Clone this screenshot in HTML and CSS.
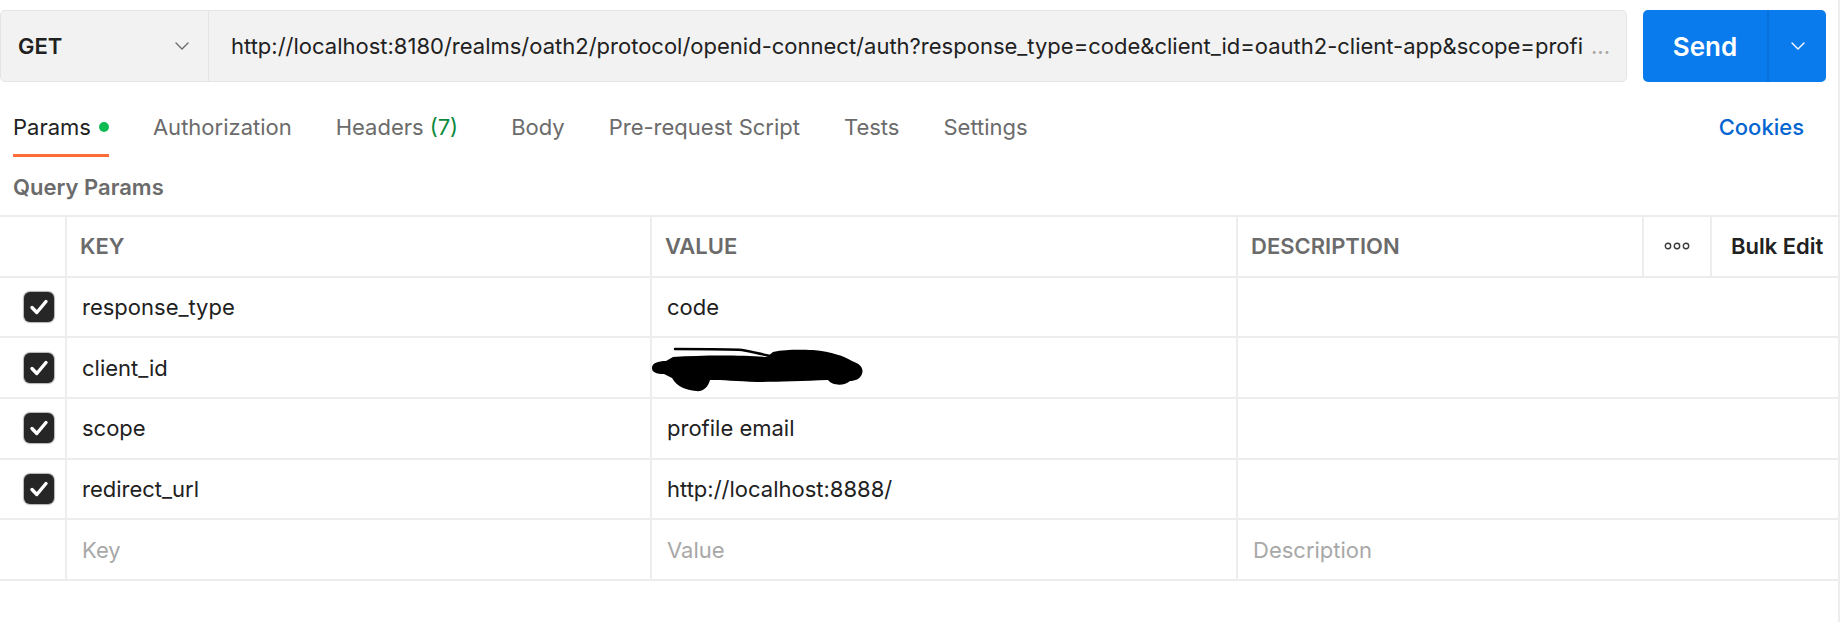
FILE: index.html
```html
<!DOCTYPE html>
<html lang="en">
<head>
<meta charset="utf-8">
<title>Request</title>
<link rel="stylesheet" href="styles.css">
</head>
<body>
<div class="page">
  <div class="request-bar">
    <div class="request-box">
      <div class="method">
        <span class="method-name">GET</span>
        <svg class="chev" width="14" height="8" viewBox="0 0 14 8"><polyline points="1,1 7,7 13,1" fill="none" stroke="#6b6b6b" stroke-width="1.4" stroke-linecap="round" stroke-linejoin="round"/></svg>
      </div>
      <div class="url"><span class="url-text">http://localhost:8180/realms/oath2/protocol/openid-connect/auth?response_type=code&amp;client_id=oauth2-client-app&amp;scope=profi</span><span class="url-more">...</span></div>
    </div>
    <div class="send">
      <span class="send-label">Send</span>
      <span class="send-drop"><svg width="14" height="8" viewBox="0 0 14 8"><polyline points="1,1 7,7 13,1" fill="none" stroke="#ffffff" stroke-width="1.4" stroke-linecap="round" stroke-linejoin="round"/></svg></span>
    </div>
  </div>

  <div class="tabs">
    <div class="tab active">Params<span class="dot"></span></div>
    <div class="tab">Authorization</div>
    <div class="tab tab-headers">Headers <span class="count">(7)</span></div>
    <div class="tab">Body</div>
    <div class="tab">Pre-request Script</div>
    <div class="tab">Tests</div>
    <div class="tab">Settings</div>
    <div class="tab cookies">Cookies</div>
  </div>

  <div class="section-title">Query Params</div>

  <div class="table">
    <div class="row head">
      <div class="cell c-check"></div>
      <div class="cell">KEY</div>
      <div class="cell">VALUE</div>
      <div class="cell">DESCRIPTION</div>
      <div class="cell c-more"><svg width="26" height="8" viewBox="0 0 26 8"><circle cx="4" cy="4" r="2.7" fill="none" stroke="#3a3a3a" stroke-width="1.4"/><circle cx="13" cy="4" r="2.7" fill="none" stroke="#3a3a3a" stroke-width="1.4"/><circle cx="22" cy="4" r="2.7" fill="none" stroke="#3a3a3a" stroke-width="1.4"/></svg></div>
      <div class="cell c-bulk">Bulk Edit</div>
    </div>

    <div class="row">
      <div class="cell c-check"><span class="checkbox"><svg width="30" height="30" viewBox="0 0 30 30"><polyline points="8,15.5 12.8,20.5 22,9.5" fill="none" stroke="#fff" stroke-width="3.4" stroke-linecap="round" stroke-linejoin="round"/></svg></span></div>
      <div class="cell">response_type</div>
      <div class="cell">code</div>
      <div class="cell c-desc"></div>
    </div>

    <div class="row">
      <div class="cell c-check"><span class="checkbox"><svg width="30" height="30" viewBox="0 0 30 30"><polyline points="8,15.5 12.8,20.5 22,9.5" fill="none" stroke="#fff" stroke-width="3.4" stroke-linecap="round" stroke-linejoin="round"/></svg></span></div>
      <div class="cell">client_id</div>
      <div class="cell c-redacted"><svg class="scribble" width="214" height="48" viewBox="0 0 214 48"><path d="M0,22 C0,17 6,15 14,15 L21,11 C50,9 90,9 115,11 L121,6 C135,3 150,4 161,4 C180,6 192,10 200,15 C208,18 212,22 210,28 C208,33 203,35 198,35 C193,40 180,40 176,34 C150,35 120,36 105,36 C85,35 70,34 58,34 C56,42 50,46 44,45 C34,44 25,41 20,32 L12,28 C4,28 0,26 0,22 Z" fill="#000"/><path d="M23,3 C50,3 80,3 90,4 C100,6 110,8 118,10" fill="none" stroke="#000" stroke-width="2.4" stroke-linecap="round"/></svg></div>
      <div class="cell c-desc"></div>
    </div>

    <div class="row">
      <div class="cell c-check"><span class="checkbox"><svg width="30" height="30" viewBox="0 0 30 30"><polyline points="8,15.5 12.8,20.5 22,9.5" fill="none" stroke="#fff" stroke-width="3.4" stroke-linecap="round" stroke-linejoin="round"/></svg></span></div>
      <div class="cell">scope</div>
      <div class="cell">profile email</div>
      <div class="cell c-desc"></div>
    </div>

    <div class="row">
      <div class="cell c-check"><span class="checkbox"><svg width="30" height="30" viewBox="0 0 30 30"><polyline points="8,15.5 12.8,20.5 22,9.5" fill="none" stroke="#fff" stroke-width="3.4" stroke-linecap="round" stroke-linejoin="round"/></svg></span></div>
      <div class="cell">redirect_url</div>
      <div class="cell">http://localhost:8888/</div>
      <div class="cell c-desc"></div>
    </div>

    <div class="row">
      <div class="cell c-check"></div>
      <div class="cell placeholder">Key</div>
      <div class="cell placeholder">Value</div>
      <div class="cell c-desc placeholder">Description</div>
    </div>
  </div>
</div>
</body>
</html>
```

FILE: styles.css
```css
* {
  box-sizing: border-box;
}

html,
body {
  margin: 0;
  background: #ffffff;
}

body {
  font-family: Inter, "Noto Sans", "Liberation Sans", sans-serif;
  color: #212121;
}

.page {
  width: 1840px;
  height: 622px;
  border-right: 2px solid #ededed;
  overflow: hidden;
}

/* Request bar */
.request-bar {
  display: flex;
  gap: 16px;
  padding: 10px 12px 0 0;
}

.request-box {
  flex: 1;
  display: flex;
  height: 72px;
  background: #f2f2f2;
  border: 1px solid #e4e4e4;
  border-radius: 5px;
  overflow: hidden;
}

.method {
  width: 208px;
  flex: none;
  display: flex;
  align-items: center;
  padding: 0 19px 0 17px;
  border-right: 1px solid #e4e4e4;
}

.method-name {
  font-size: 22px;
  font-weight: 600;
  color: #212121;
}

.chev {
  margin-left: auto;
}

.url {
  flex: 1;
  display: flex;
  align-items: center;
  padding-left: 22px;
  font-size: 22px;
  color: #212121;
  white-space: nowrap;
  overflow: hidden;
}

.url-more {
  margin-left: 8px;
  color: #a6a6a6;
}

.send {
  width: 183px;
  height: 72px;
  flex: none;
  display: flex;
  background: #097bed;
  border-radius: 5px;
  color: #ffffff;
}

.send-label {
  width: 124px;
  display: flex;
  align-items: center;
  justify-content: center;
  font-size: 26px;
  font-weight: 600;
}

.send-drop {
  flex: 1;
  display: flex;
  align-items: center;
  justify-content: center;
  border-left: 2px solid rgba(0, 0, 0, 0.08);
}

/* Tabs */
.tabs {
  display: flex;
  align-items: flex-end;
  gap: 44px;
  margin-top: 31px;
  padding: 0 34px 0 13px;
}

.tab {
  display: flex;
  align-items: center;
  font-size: 22px;
  line-height: 28px;
  padding-bottom: 13px;
  border-bottom: 3px solid transparent;
  color: #6b6b6b;
  white-space: nowrap;
}

.tab.active {
  color: #212121;
  border-bottom-color: #ff6c37;
}

.dot {
  width: 10px;
  height: 10px;
  border-radius: 50%;
  background: #0cbb52;
  margin-left: 8px;
}

.count {
  color: #0b8a3e;
  margin-left: 6px;
}

.tab-headers {
  margin-right: 9px;
}

.cookies {
  margin-left: auto;
  color: #0265d2;
  font-weight: 500;
}

/* Section */
.section-title {
  padding: 16px 13px 14px;
  font-size: 22px;
  line-height: 28px;
  font-weight: 600;
  color: #6b6b6b;
}

/* Table */
.table {
  border-bottom: 2px solid #ededed;
}

.row {
  display: grid;
  grid-template-columns: 65px 585px 586px 406px 68px 1fr;
  height: 60.7px;
  border-top: 2px solid #ededed;
}

.cell {
  display: flex;
  align-items: center;
  padding-left: 15px;
  border-left: 2px solid #ededed;
  font-size: 22px;
  color: #212121;
  white-space: nowrap;
  overflow: hidden;
}

.cell.c-check {
  border-left: none;
  padding-left: 24px;
}

.head .cell {
  color: #6b6b6b;
  font-weight: 600;
  padding-left: 13px;
}

.head .cell.c-more {
  padding-left: 0;
  justify-content: center;
}

.head .cell.c-bulk {
  padding-left: 19px;
  color: #212121;
}

.cell.c-desc {
  grid-column: span 3;
}

.cell.c-redacted {
  padding-left: 0;
  overflow: visible;
}

.scribble {
  margin-top: 4px;
}

.placeholder {
  color: #a8a8a8;
}

.checkbox {
  width: 30px;
  height: 30px;
  display: block;
  border-radius: 6px;
  background: #262626;
  box-shadow: 0 0 1px 1px rgba(0, 0, 0, 0.3);
}

.checkbox svg {
  display: block;
}
```
